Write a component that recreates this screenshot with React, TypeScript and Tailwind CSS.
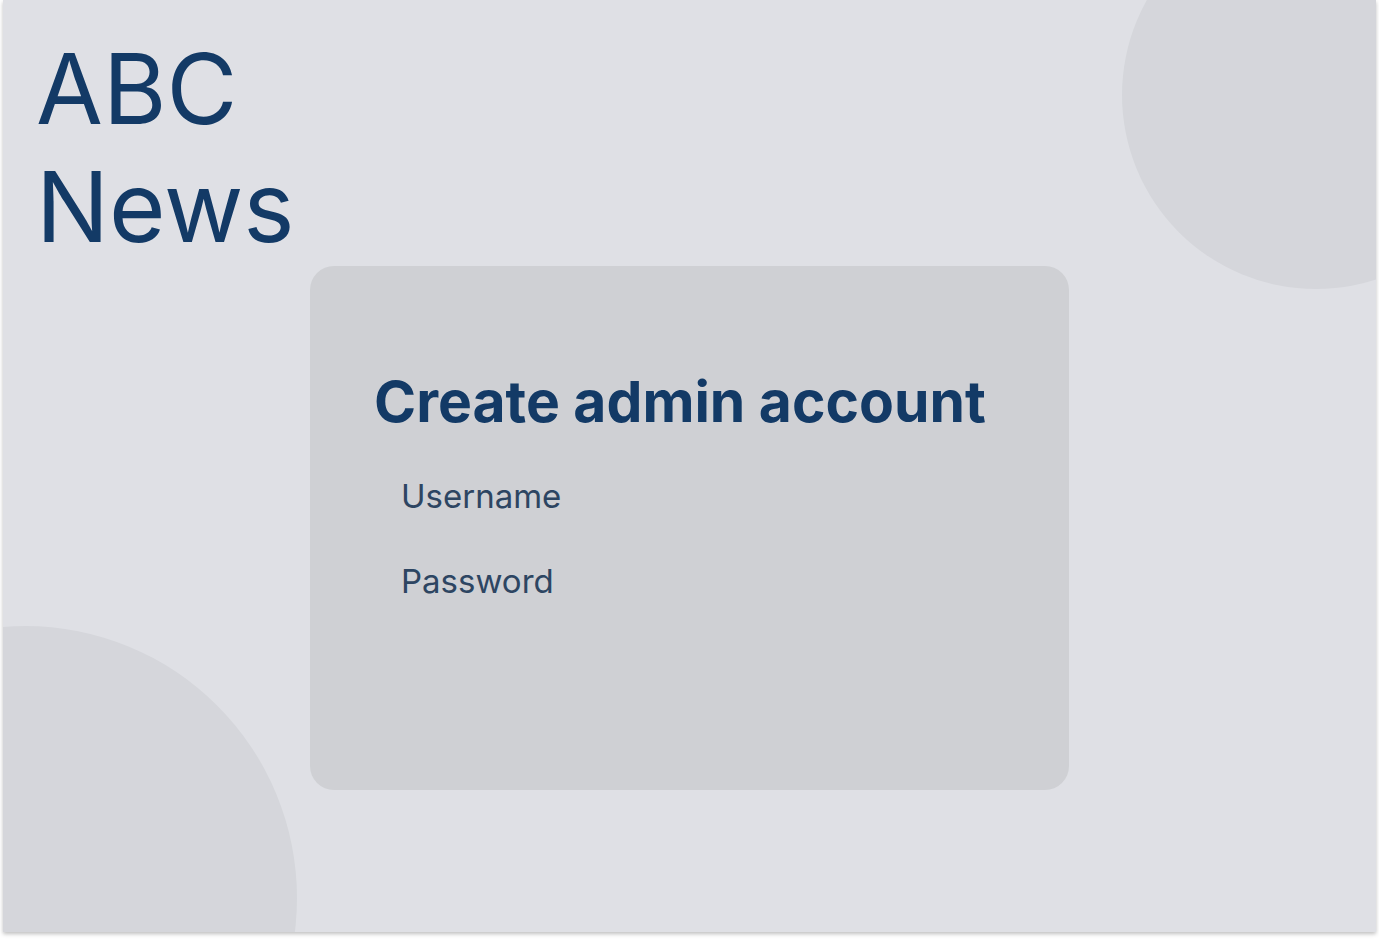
import React from 'react';

export default function App() {
  return (
    <div className="min-h-screen bg-white" style={{ fontFamily: 'Inter, "Noto Sans", sans-serif' }}>
      <div className="relative mx-auto h-[932px] w-[1373px] overflow-hidden bg-[#dfe0e5] shadow-[0_2px_4px_rgba(0,0,0,0.25)]">
        {/* decorative circles */}
        <div className="absolute left-[1119px] top-[-99px] h-[388px] w-[388px] rounded-full bg-[#d5d6db]" />
        <div className="absolute left-[-250px] top-[626px] h-[544px] w-[544px] rounded-full bg-[#d5d6db]" />

        <div className="relative flex flex-col">
          <h1 className="ml-[33px] mt-[30px] text-[97px] font-normal leading-[118px] text-[#133a66]">
            ABC
            <br />
            News
          </h1>

          <div className="mx-auto h-[524px] w-[759px] rounded-[24px] bg-[#cfd0d4] pl-[64px] pt-[107px]">
            <h2 className="text-[57px] font-bold leading-[57px] text-[#133a66]">Create admin account</h2>
            <div className="ml-[27px] mt-[50px] flex flex-col gap-[52px] text-[33px] leading-[33px] text-[#2d4562]">
              <label>Username</label>
              <label>Password</label>
            </div>
          </div>
        </div>
      </div>
    </div>
  );
}
